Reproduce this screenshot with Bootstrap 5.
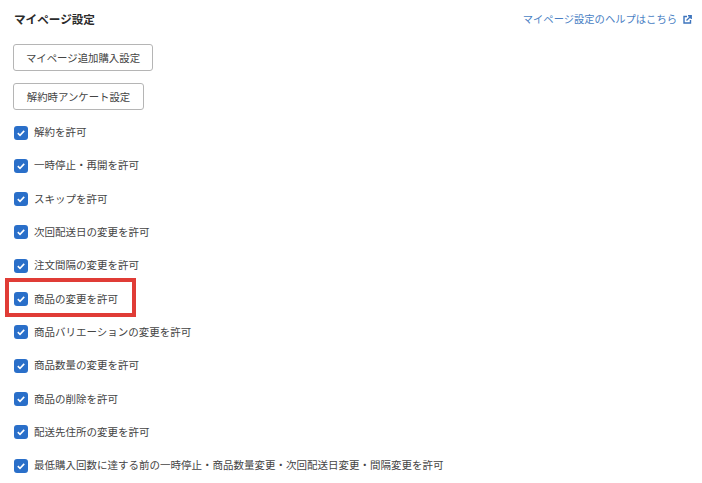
<!DOCTYPE html>
<html lang="ja">

<head>
    <meta charset="UTF-8">
    <meta name="viewport" content="width=device-width, initial-scale=1.0">
    <title>マイページ設定</title>
    <link href="https://cdn.jsdelivr.net/npm/bootstrap@5.3.3/dist/css/bootstrap.min.css" rel="stylesheet">
    <style>
        body {
            font-family: "Noto Sans CJK JP", "Liberation Sans", sans-serif;
            color: #333;
            background: #fff;
            overflow: hidden;
        }

        .page-wrap {
            padding: 10px 10px 0 14px;
        }

        .page-title {
            font-size: 11.6px;
            font-weight: 700;
            line-height: 18px;
            margin: 0;
            color: #2b2b2b;
        }

        .help-link {
            font-size: 10.3px;
            line-height: 18px;
            color: #4a7fc4;
            text-decoration: none;
            gap: 6px;
        }

        .btn-area {
            margin: 16px 0 0 -1px;
            gap: 12px;
        }

        .setting-btn {
            font-size: 10.4px;
            line-height: 16px;
            color: #444;
            background: #fff;
            border: 1px solid #b5b5b5;
            border-radius: 3px;
            padding: 0;
            height: 27px;
        }

        .btn-wide {
            width: 140px;
        }

        .btn-narrow {
            width: 131px;
        }

        .check-list {
            margin-top: 5.4px;
        }

        .check-row {
            height: 33.3px;
            font-size: 10.5px;
            color: #444;
            gap: 6px;
        }

        .check-box {
            width: 14px;
            height: 14px;
            margin-top: 1px;
            background: #2a6fc9;
            border-radius: 3px;
            flex-shrink: 0;
        }

        .highlight-box {
            position: absolute;
            left: 5px;
            top: 278px;
            width: 131px;
            height: 39px;
            border: 4px solid #e03c36;
        }
    </style>
</head>

<body>

    <div class="page-wrap">
        <div class="d-flex justify-content-between align-items-center">
            <h1 class="page-title">マイページ設定</h1>
            <a class="help-link d-flex align-items-center" href="#">
                マイページ設定のヘルプはこちら
                <svg width="9" height="9" viewBox="0 0 9 9" fill="none" stroke="#3d74bd" stroke-width="1.4">
                    <path d="M4 1.500H1v6.500h6.500V5" />
                    <path d="M3.500 5.500 8 1M5 .8h3.200V4" />
                </svg>
            </a>
        </div>

        <div class="d-flex flex-column align-items-start btn-area">
            <button type="button" class="setting-btn btn-wide">マイページ追加購入設定</button>
            <button type="button" class="setting-btn btn-narrow">解約時アンケート設定</button>
        </div>

        <div id="checks" class="check-list"></div>
    </div>

    <div class="highlight-box"></div>

    <script src="https://cdn.jsdelivr.net/npm/bootstrap@5.3.3/dist/js/bootstrap.bundle.min.js"></script>
    <script type="text/javascript">
        const labels = [
            "解約を許可",
            "一時停止・再開を許可",
            "スキップを許可",
            "次回配送日の変更を許可",
            "注文間隔の変更を許可",
            "商品の変更を許可",
            "商品バリエーションの変更を許可",
            "商品数量の変更を許可",
            "商品の削除を許可",
            "配送先住所の変更を許可",
            "最低購入回数に達する前の一時停止・商品数量変更・次回配送日変更・間隔変更を許可"
        ];
        const tick = `<svg width="14" height="14" viewBox="0 0 14 14" fill="none" stroke="#fff" stroke-width="1.6"><path d="M3.800 7.200 6 9.300 10.200 4.900"/></svg>`;
        document.getElementById('checks').innerHTML = labels.map(txt => `
            <div class="check-row d-flex align-items-center">
                <span class="check-box d-flex">${tick}</span>
                <span>${txt}</span>
            </div>`).join("");
    </script>

</body>

</html>
